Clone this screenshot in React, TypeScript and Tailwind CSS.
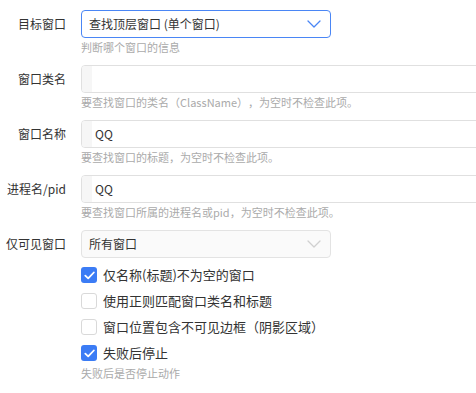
import React from "react";

const font = { fontFamily: '"Noto Sans CJK SC", "Noto Sans", sans-serif' };

function Chevron({ color }: { color: string }) {
  return (
    <svg width="14" height="8" viewBox="0 0 14 8" fill="none">
      <path d="M1 1 L7 7 L13 1" stroke={color} strokeWidth="1.3" strokeLinecap="round" strokeLinejoin="round" />
    </svg>
  );
}

function Row({ label, children, help }: { label: string; children: React.ReactNode; help?: string }) {
  return (
    <div className="flex items-start mb-[11px]">
      <div className="w-[66px] shrink-0 text-right text-[12px] leading-[28px] text-[#333]">{label}</div>
      <div className="ml-[15px] flex flex-col">
        {children}
        {help && <div className="mt-[2px] text-[11px] leading-[14px] text-[#aaa] whitespace-nowrap">{help}</div>}
      </div>
    </div>
  );
}

function TextInput({ value }: { value: string }) {
  return (
    <div className="flex h-[28px] w-[420px] rounded-[4px] border border-[#e0e0e0] bg-white overflow-hidden">
      <div className="w-[10px] bg-[#f6f6f6]" />
      <div className="pl-[3px] text-[12px] leading-[26px] text-[#333]">{value}</div>
    </div>
  );
}

function Check({ checked, label }: { checked: boolean; label: string }) {
  return (
    <div className="flex h-[26px] items-center">
      {checked ? (
        <div className="flex h-[16px] w-[16px] items-center justify-center rounded-[3px] bg-[#3b7cf5]">
          <svg width="11" height="9" viewBox="0 0 11 9" fill="none">
            <path d="M1.3 4.6 L4.2 7.4 L9.8 1.5" stroke="white" strokeWidth="1.8" strokeLinecap="round" strokeLinejoin="round" />
          </svg>
        </div>
      ) : (
        <div className="h-[16px] w-[16px] rounded-[3px] border border-[#d9d9d9] bg-white" />
      )}
      <span className="ml-[6px] text-[13px] text-[#333] whitespace-nowrap">{label}</span>
    </div>
  );
}

export default function App() {
  return (
    <div className="w-[476px] h-[393px] bg-white overflow-hidden pt-[10px] [text-spacing-trim:space-all]" style={font}>
      <Row label="目标窗口" help="判断哪个窗口的信息">
        <div className="flex h-[28px] w-[250px] items-center justify-between rounded-[4px] border border-[#4a86f5] bg-white pl-[7px] pr-[9px]">
          <span className="text-[12px] text-[#333]">查找顶层窗口 (单个窗口)</span>
          <Chevron color="#4a86f5" />
        </div>
      </Row>
      <Row label="窗口类名" help="要查找窗口的类名（ClassName），为空时不检查此项。">
        <TextInput value="" />
      </Row>
      <Row label="窗口名称" help="要查找窗口的标题，为空时不检查此项。">
        <TextInput value="QQ" />
      </Row>
      <Row label="进程名/pid" help="要查找窗口所属的进程名或pid，为空时不检查此项。">
        <TextInput value="QQ" />
      </Row>
      <div className="flex items-start">
        <div className="w-[66px] shrink-0 text-right text-[12px] leading-[28px] text-[#333]">仅可见窗口</div>
        <div className="ml-[15px] flex flex-col">
          <div className="flex h-[28px] w-[250px] items-center justify-between rounded-[4px] border border-[#e3e3e3] bg-[#fafafa] pl-[7px] pr-[9px]">
            <span className="text-[12px] text-[#333]">所有窗口</span>
            <Chevron color="#d0d0d0" />
          </div>
          <div className="mt-[4px]">
            <Check checked label="仅名称(标题)不为空的窗口" />
            <Check checked={false} label="使用正则匹配窗口类名和标题" />
            <Check checked={false} label="窗口位置包含不可见边框（阴影区域）" />
            <Check checked label="失败后停止" />
            <div className="text-[11px] leading-[14px] text-[#aaa]">失败后是否停止动作</div>
          </div>
        </div>
      </div>
    </div>
  );
}
